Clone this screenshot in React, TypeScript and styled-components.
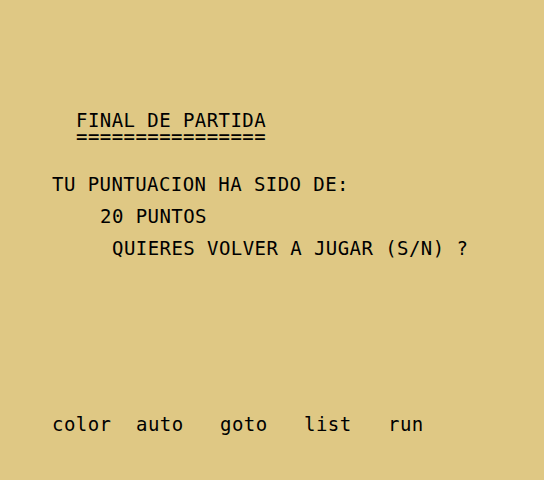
import React from "react";
import styled, { createGlobalStyle } from "styled-components";

const GlobalStyle = createGlobalStyle`
  html, body {
    margin: 0;
    padding: 0;
    background: #dfc884;
  }
  #root {
    width: 544px;
    height: 480px;
  }
`;

const Screen = styled.div`
  box-sizing: border-box;
  width: 544px;
  height: 480px;
  padding: 48px 0 0 52px;
  background: #dfc884;
  color: #000000;
  font-family: "DejaVu Sans Mono", "Liberation Mono", monospace;
  font-size: 19px;
  letter-spacing: 0.44px;
  display: grid;
  grid-template-rows: repeat(24, 16px);
  overflow: hidden;
`;

const Line = styled.div<{ $col: number; $row: number }>`
  grid-row: ${(p) => p.$row + 1};
  padding-left: ${(p) => p.$col * 12}px;
  height: 16px;
  line-height: 16px;
  white-space: pre;
`;

const KeyBar = styled.div`
  grid-row: 24;
  display: flex;
  height: 16px;
  line-height: 16px;
`;

const Key = styled.span`
  width: 84px;
  white-space: pre;
`;

const keys = ["color", "auto", "goto", "list", "run"];

export default function App() {
  return (
    <>
      <GlobalStyle />
      <Screen>
        <Line $row={4} $col={2}>FINAL DE PARTIDA</Line>
        <Line $row={5} $col={2}>================</Line>
        <Line $row={8} $col={0}>TU PUNTUACION HA SIDO DE:</Line>
        <Line $row={10} $col={4}>20 PUNTOS</Line>
        <Line $row={12} $col={5}>QUIERES VOLVER A JUGAR (S/N) ?</Line>
        <KeyBar>
          {keys.map((k) => (
            <Key key={k}>{k}</Key>
          ))}
        </KeyBar>
      </Screen>
    </>
  );
}
